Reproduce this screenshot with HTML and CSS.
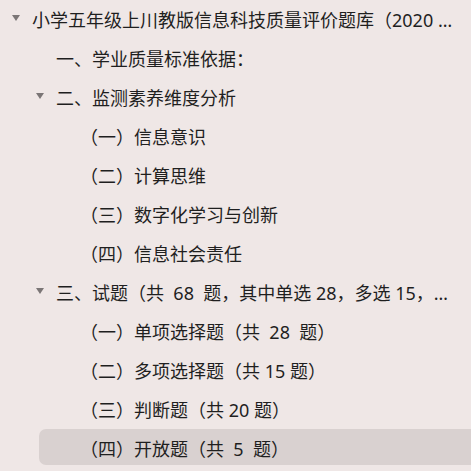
FILE: index.html
```html
<!DOCTYPE html>
<html lang="zh-CN">
<head>
    <meta charset="UTF-8">
    <meta name="viewport" content="width=device-width, initial-scale=1.0">
    <title>目录</title>
    <link rel="stylesheet" href="styles.css">
</head>
<body>
    <ul class="tree">
        <li class="node level-0 open">
            <div class="row"><span class="caret"></span><span class="label">小学五年级上川教版信息科技质量评价题库（2020 版课程标准）</span></div>
            <ul>
                <li class="node level-1">
                    <div class="row"><span class="label">一、学业质量标准依据：</span></div>
                </li>
                <li class="node level-1 open">
                    <div class="row"><span class="caret"></span><span class="label">二、监测素养维度分析</span></div>
                    <ul>
                        <li class="node level-2"><div class="row"><span class="label">（一）信息意识</span></div></li>
                        <li class="node level-2"><div class="row"><span class="label">（二）计算思维</span></div></li>
                        <li class="node level-2"><div class="row"><span class="label">（三）数字化学习与创新</span></div></li>
                        <li class="node level-2"><div class="row"><span class="label">（四）信息社会责任</span></div></li>
                    </ul>
                </li>
                <li class="node level-1 open">
                    <div class="row"><span class="caret"></span><span class="label">三、试题（共  68  题，其中单选 28，多选 15，判断 20，开放 5）</span></div>
                    <ul>
                        <li class="node level-2"><div class="row"><span class="label">（一）单项选择题（共  28  题）</span></div></li>
                        <li class="node level-2"><div class="row"><span class="label">（二）多项选择题（共 15 题）</span></div></li>
                        <li class="node level-2"><div class="row"><span class="label">（三）判断题（共 20 题）</span></div></li>
                        <li class="node level-2 active"><div class="row"><span class="label">（四）开放题（共  5  题）</span></div></li>
                    </ul>
                </li>
            </ul>
        </li>
    </ul>
</body>
</html>
```

FILE: styles.css
```css
html, body {
    margin: 0;
    padding: 0;
    background-color: #efe7e6;
}
body {
    font-family: "Noto Sans", "Noto Sans CJK SC", sans-serif;
    font-size: 18px;
    color: #1f1f1f;
    overflow: hidden;
}
.tree, .tree ul {
    list-style: none;
    margin: 0;
    padding: 0;
}
.tree ul {
    margin-top: 3px;
    display: flex;
    flex-direction: column;
    gap: 3px;
}
.row {
    height: 36px;
    display: flex;
    align-items: center;
    white-space: pre;
    padding-right: 14px;
}
.label {
    overflow: hidden;
    text-overflow: ellipsis;
    padding-top: 2px;
}
.caret {
    width: 0;
    height: 0;
    border-left: 4px solid transparent;
    border-right: 4px solid transparent;
    border-top: 6px solid #7b7676;
    margin-right: 12px;
    flex: none;
}
.level-0 > .row { padding-left: 32px; }
.level-1 > .row { padding-left: 56px; }
.level-2 > .row { padding-left: 80px; }
.level-0.open > .row { padding-left: 12px; }
.level-1.open > .row { padding-left: 36px; }
.active > .row {
    background-color: #d9d1d0;
    border-radius: 7px;
    margin-left: 39px;
    margin-right: -10px;
    padding-left: 41px;
}
```
